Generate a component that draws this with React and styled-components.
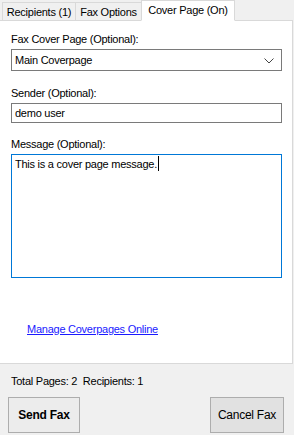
import React from 'react';
import styled, { createGlobalStyle } from 'styled-components';

const GlobalStyle = createGlobalStyle`
    html, body {
        margin: 0;
        padding: 0;
        background: #f0f0f0;
    }
    body {
        font-family: "Liberation Sans", Arial, sans-serif;
        font-size: 11px;
        letter-spacing: -0.25px;
        color: #000;
    }
`;

const tabs = [
    { label: 'Recipients (1)', width: 74 },
    { label: 'Fax Options', width: 67 },
    { label: 'Cover Page (On)', width: 94, active: true },
];

const App = () => {
    return (
        <>
            <GlobalStyle />
            <StyledWindow>
                <TabStrip>
                    {tabs.map((t) => (
                        <Tab key={t.label} $active={t.active} $width={t.width}>{t.label}</Tab>
                    ))}
                </TabStrip>
                <Panel>
                    <Label>Fax Cover Page (Optional):</Label>
                    <Select>
                        <span>Main Coverpage</span>
                        <svg width="10" height="6" viewBox="0 0 10 6">
                            <polyline points="0.5,0.5 5,5 9.5,0.5" fill="none" stroke="#444" strokeWidth="1" />
                        </svg>
                    </Select>

                    <Label $top={15}>Sender (Optional):</Label>
                    <Input>demo user</Input>

                    <Label $top={14}>Message (Optional):</Label>
                    <TextArea>
                        This is a cover page message.<Caret />
                    </TextArea>

                    <Link href="#">Manage Coverpages Online</Link>
                </Panel>
                <Footer>
                    <Summary>Total Pages: 2&nbsp; Recipients: 1</Summary>
                    <ButtonRow>
                        <Button $primary>Send Fax</Button>
                        <Button>Cancel Fax</Button>
                    </ButtonRow>
                </Footer>
            </StyledWindow>
        </>
    );
};

export default App;

const StyledWindow = styled.div`
    width: 294px;
    height: 435px;
    display: flex;
    flex-direction: column;
    background: #f0f0f0;
    overflow: hidden;
`;

const TabStrip = styled.div`
    height: 20px;
    display: flex;
    align-items: flex-end;
    padding-left: 2px;
    border-bottom: 1px solid #d9d9d9;
    margin-right: 1px;
`;

const Tab = styled.div`
    position: relative;
    box-sizing: border-box;
    width: ${(p) => p.$width}px;
    height: ${(p) => (p.$active ? 21 : 18)}px;
    margin-bottom: ${(p) => (p.$active ? -1 : 0)}px;
    padding-top: 2px;
    text-align: center;
    white-space: nowrap;
    line-height: 14px;
    background: ${(p) => (p.$active ? '#fff' : '#f0f0f0')};
    border: 1px solid #d9d9d9;
    border-bottom: ${(p) => (p.$active ? '1px solid #fff' : 'none')};
    & + & {
        margin-left: -1px;
    }
`;

const Panel = styled.div`
    height: 343px;
    box-sizing: border-box;
    background: #fff;
    border-right: 1px solid #d9d9d9;
    border-bottom: 1px solid #d9d9d9;
    margin-right: 1px;
    padding: 11px 10px 0 11px;
    display: flex;
    flex-direction: column;
    align-items: flex-start;
`;

const Label = styled.div`
    line-height: 14px;
    margin-top: ${(p) => p.$top || 0}px;
    margin-bottom: 3px;
`;

const Select = styled.div`
    box-sizing: border-box;
    width: 271px;
    height: 22px;
    border: 1px solid #7a7a7a;
    display: flex;
    align-items: center;
    justify-content: space-between;
    padding: 0 7px 0 3px;

    svg {
        margin-top: 1px;
    }
`;

const Input = styled.div`
    box-sizing: border-box;
    width: 271px;
    height: 20px;
    border: 1px solid #7a7a7a;
    padding: 2px 3px;
    line-height: 14px;
`;

const TextArea = styled.div`
    box-sizing: border-box;
    width: 271px;
    height: 124px;
    border: 1px solid #0078d7;
    padding: 1px 3px;
    line-height: 14px;
`;

const Caret = styled.span`
    display: inline-block;
    width: 1px;
    height: 15px;
    background: #000;
    vertical-align: -3px;
    margin-left: 1px;
`;

const Link = styled.a`
    margin: 44px 0 0 16px;
    color: #1a1aff;
    text-decoration: underline;
    line-height: 14px;
`;

const Footer = styled.div`
    flex: 1;
    padding: 10px 10px 0 8px;
`;

const Summary = styled.div`
    padding-left: 3px;
    line-height: 14px;
`;

const ButtonRow = styled.div`
    display: flex;
    justify-content: space-between;
    margin-top: 9px;
`;

const Button = styled.button`
    box-sizing: border-box;
    width: ${(p) => (p.$primary ? 72 : 74)}px;
    height: 36px;
    font-family: "Liberation Sans", Arial, sans-serif;
    font-size: 12px;
    letter-spacing: -0.25px;
    font-weight: ${(p) => (p.$primary ? 700 : 400)};
    color: #000;
    background: ${(p) => (p.$primary ? '#ececec' : '#e1e1e1')};
    border: 1px solid #adadad;
    padding: 0;
`;
